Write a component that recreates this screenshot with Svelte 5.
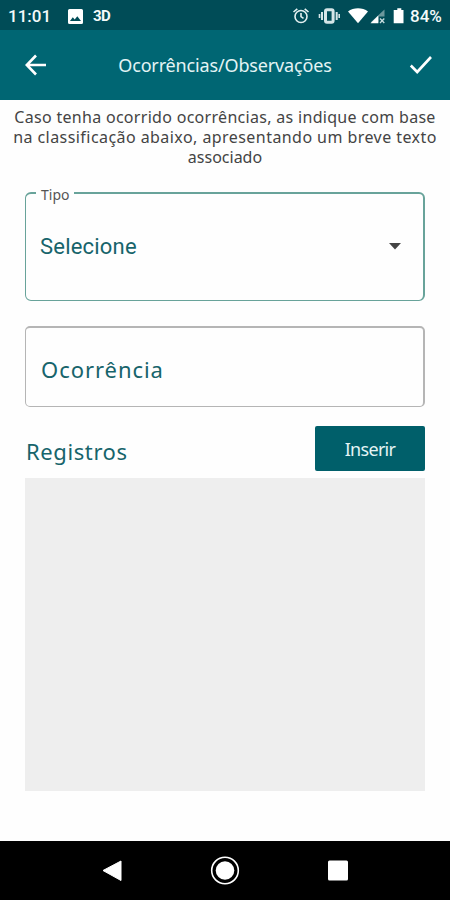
<script lang="ts">
    let tipo = 'Selecione';
    let intro = [
        'Caso tenha ocorrido ocorrências, as indique com base',
        'na classificação abaixo, apresentando um breve texto',
        'associado'
    ];
</script>

<div class="screen">
    <div class="status">
        <span class="clock">11:01</span>
        <svg class="photo" width="15" height="15" viewBox="0 0 15 15">
            <path fill="#fff" fill-rule="evenodd" d="M1.500 0h12A1.500 1.500 0 0 1 15 1.500v12a1.500 1.500 0 0 1-1.500 1.500h-12A1.500 1.500 0 0 1 0 13.500v-12A1.500 1.500 0 0 1 1.500 0zM2 12h11L9.300 7.200 6.700 10.400 4.800 8.300z" />
        </svg>
        <span class="threed">3D</span>
        <svg class="tray" width="114" height="20" viewBox="0 0 114 20">
            <g fill="none" stroke="#e3f0f1" stroke-width="1.6">
                <circle cx="9" cy="10.500" r="6" />
                <path d="M9 7v3.700l2.500 1.700M1.500 6l3.800-3.200M16.500 6l-3.800-3.200" />
            </g>
            <g fill="none" stroke="#d5e5e7">
                <rect x="33.500" y="3.700" width="7.600" height="12.600" rx="1.500" stroke-width="3" />
                <path d="M30 6v8M44.700 6v8" stroke-width="2" />
                <path d="M27.500 8v4M47.200 8v4" stroke-width="1.600" />
            </g>
            <path fill="#fff" d="M56 5.500C61.500 1.300 70.500 1.300 76 5.500L66 17.300z" />
            <path fill="#6c979c" d="M92.500 3.500v7h-6v6h-8z" />
            <path fill="#fff" d="M78.500 17.300l7.800-7.700v7.700z" />
            <path stroke="#c7dcde" stroke-width="1.300" d="M88 12.500l4.300 4.500M92.300 12.500L88 17" />
            <path fill="#fff" d="M105.300 2.300h4v1.600h2.200v13.300h-9.800V3.900h3.600z" />
        </svg>
        <span class="charge">84%</span>
    </div>

    <header>
        <svg width="22" height="22" viewBox="0 0 22 22">
            <path d="M21 11H2M11 1.500L1.800 11l9.200 9.500" />
        </svg>
        <h1>Ocorrências/Observações</h1>
        <svg width="24" height="20" viewBox="0 0 24 20">
            <path d="M1.800 10.500l6.400 6.500L22 2" />
        </svg>
    </header>

    <main>
        <div class="intro">
            {#each intro as line}
                <p>{line}</p>
            {/each}
        </div>

        <fieldset>
            <legend><span>Tipo</span></legend>
            <div class="value">
                <span>{tipo}</span>
                <svg width="12" height="7" viewBox="0 0 12 7">
                    <path d="M0 0h12L6 6.500z" />
                </svg>
            </div>
        </fieldset>

        <div class="field"><span>Ocorrência</span></div>

        <div class="row">
            <h2>Registros</h2>
            <button>Inserir</button>
        </div>
        <div class="list"></div>
    </main>

    <nav>
        <svg width="450" height="59" viewBox="0 0 450 59">
            <path fill="#fff" stroke="#fff" stroke-linejoin="round" d="M103 29.500l18-9.500v19.500z" />
            <circle cx="225" cy="29.500" r="13.300" fill="none" stroke="#fff" stroke-width="1.600" />
            <circle cx="225" cy="29.500" r="9.300" fill="#fff" />
            <rect x="328" y="19.500" width="20" height="20" rx="1.500" fill="#fff" />
        </svg>
    </nav>
</div>

<style>
    :global(body) {
        margin: 0;
        background: #fefefe;
    }

    .screen {
        display: flex;
        flex-direction: column;
        width: 450px;
        height: 900px;
        overflow: hidden;
        font-family: "Noto Sans", sans-serif;
    }

    .status {
        display: flex;
        align-items: center;
        box-sizing: border-box;
        height: 30px;
        padding: 2px 7px 0 8px;
        background: #004c57;
        color: #f4fafa;
        font: 500 17px/20px Roboto, sans-serif;
    }
    .clock {
        width: 60px;
    }
    .threed {
        margin-left: 10px;
        font-size: 15px;
        font-weight: 700;
        letter-spacing: -0.5px;
    }
    .tray {
        margin-left: auto;
    }
    .charge {
        width: 33px;
        margin-left: 4px;
        font-size: 17px;
        white-space: nowrap;
    }

    header {
        display: flex;
        align-items: center;
        justify-content: space-between;
        box-sizing: border-box;
        height: 70px;
        padding: 0 17px 0 25px;
        background: #006673;
        color: #e4f4f5;
    }
    header path {
        fill: none;
        stroke: #fff;
        stroke-width: 2.6;
    }
    h1 {
        margin: 0 6px 0 0;
        font-size: 18px;
        font-weight: 400;
        letter-spacing: -0.15px;
        white-space: nowrap;
    }

    main {
        flex: 1;
        padding: 7px 25px 0;
    }
    .intro {
        margin: 0 -25px;
        color: #444;
        text-align: center;
    }
    p {
        margin: 0;
        font-size: 16px;
        line-height: 20px;
        letter-spacing: 0.3px;
        white-space: nowrap;
    }
    p:nth-child(2) {
        letter-spacing: 0.44px;
    }
    p:nth-child(3) {
        letter-spacing: 0;
    }

    fieldset {
        box-sizing: border-box;
        height: 117px;
        margin: 17px 0 0;
        padding: 0 22px 0 14px;
        border: 1px solid #68a39a;
        border-width: 2px 2px 1px 1px;
        border-radius: 6px;
    }
    legend {
        margin-left: -4px;
        padding: 0 5px;
        color: #555;
        font-size: 14px;
        line-height: 18px;
    }
    legend span {
        display: block;
        margin: 2px 0 -2px;
    }
    .value {
        display: flex;
        align-items: center;
        justify-content: space-between;
        height: 88px;
        color: #17646b;
        font-family: Roboto, sans-serif;
        font-size: 22px;
        letter-spacing: 0.2px;
    }
    .value path {
        fill: #444;
    }

    .field {
        display: flex;
        align-items: center;
        box-sizing: border-box;
        height: 81px;
        margin-top: 25px;
        padding: 4px 15px 0;
        border: 1px solid #b5b5b5;
        border-width: 2px 2px 1px 1px;
        border-radius: 5px;
        color: #17646b;
        font-size: 22px;
        letter-spacing: 0.95px;
    }

    .row {
        display: flex;
        align-items: center;
        justify-content: space-between;
        height: 45px;
        margin: 19px 0 7px;
    }
    h2 {
        margin: 5px 0 0 1px;
        color: #17646b;
        font-size: 22px;
        font-weight: 400;
        letter-spacing: 0.6px;
    }
    button {
        width: 110px;
        height: 45px;
        padding: 0;
        border: 0;
        border-radius: 2px;
        background: #005f6a;
        color: #e4f4f5;
        font: 18px "Noto Sans", sans-serif;
        letter-spacing: -0.7px;
    }
    .list {
        height: 313px;
        background: #eee;
    }

    nav {
        height: 59px;
        background: #000;
    }
    nav svg {
        display: block;
    }
</style>
